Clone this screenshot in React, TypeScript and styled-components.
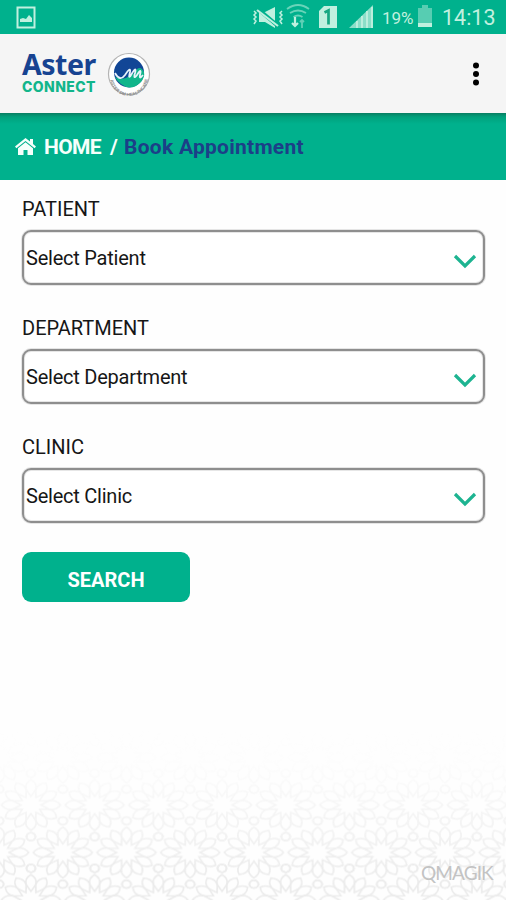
import React from "react";
import styled, { createGlobalStyle } from "styled-components";

const GREEN = "#00b18d";
const NAVY = "#1c3f88";

const GlobalStyle = createGlobalStyle`
  * { box-sizing: border-box; }
  body { margin: 0; background: #fefefe; font-family: Roboto, "Liberation Sans", sans-serif; }
`;

const Screen = styled.div`
  position: relative;
  display: flex;
  flex-direction: column;
  width: 506px;
  height: 900px;
  overflow: hidden;
  background: #fefefe;
`;

const StatusBar = styled.header`
  height: 34px;
  flex: none;
  display: flex;
  justify-content: space-between;
  padding: 0 10px 0 16px;
  background: ${GREEN};
  color: #c0f0df;
`;

const StatusIcons = styled.div`
  display: flex;
  align-items: center;
`;

const Battery = styled.span`
  width: 35px;
  margin-left: 8px;
  font-size: 17px;
  line-height: 34px;
  padding-top: 2px;
`;

const Clock = styled.span`
  width: 54px;
  margin-left: 9px;
  font-size: 21.5px;
  line-height: 36px;
  padding-top: 2px;
  white-space: nowrap;
`;

const AppBar = styled.div`
  height: 79px;
  flex: none;
  display: flex;
  align-items: center;
  padding: 0 22px;
  background: #f5f5f5;
`;

const Brand = styled.div`
  width: 75px;
`;

const BrandName = styled.div`
  height: 30px;
  color: #174391;
  font: 700 28.5px/30px "Noto Sans", sans-serif;
  letter-spacing: -0.5px;
  margin-top: -5px;
`;

const BrandSub = styled.div`
  height: 14px;
  color: #12b58b;
  font: 800 14px/14px Inter, sans-serif;
  letter-spacing: 0.4px;
  margin-top: 1px;
`;

const Emblem = styled.svg`
  margin-left: 10px;
`;

const MenuIcon = styled.svg`
  margin-left: auto;
`;

const Breadcrumb = styled.nav`
  height: 67px;
  flex: none;
  display: flex;
  align-items: center;
  padding-left: 15px;
  background: linear-gradient(#087e62 0, #00a17c 4px, ${GREEN} 11px);
  font-size: 21px;
  font-weight: 700;
`;

const Crumb = styled.span<{ $current?: boolean; $gap: number }>`
  color: ${(p) => (p.$current ? NAVY : "#f5fffb")};
  margin-left: ${(p) => p.$gap}px;
  letter-spacing: ${(p) => (p.$current ? 0.26 : -0.65)}px;
  white-space: nowrap;
`;

const Form = styled.form`
  display: flex;
  flex-direction: column;
  align-items: flex-start;
  padding: 17px 21px 0 22px;
`;

const Field = styled.label`
  width: 100%;
  height: 119px;
  display: block;
`;

const Caption = styled.span`
  display: block;
  height: 33px;
  font-size: 20px;
  line-height: 25px;
  color: #161616;
`;

const SelectBox = styled.span`
  height: 55px;
  display: flex;
  align-items: center;
  justify-content: space-between;
  padding: 0 6px 0 2px;
  border: 2px solid #8e8e8e;
  border-radius: 9px;
  background: #fff;
  box-shadow: 0 0 0 1px rgba(142, 142, 142, 0.22), inset 0 0 0 1px rgba(142, 142, 142, 0.22);
  font-size: 20px;
  letter-spacing: -0.23px;
  color: #161616;
`;

const Chevron = styled.svg`
  margin-top: 6px;
`;

const SearchButton = styled.button`
  width: 168px;
  height: 50px;
  margin-top: -2px;
  padding: 6px 0 0;
  border: 0;
  border-radius: 9px;
  background: ${GREEN};
  color: #fff;
  font: 700 20px Roboto, sans-serif;
`;

const Backdrop = styled.svg`
  position: absolute;
  left: 0;
  bottom: 0;
`;

const Watermark = styled.div`
  position: absolute;
  left: 421px;
  top: 861px;
  color: #c3c3c3;
  font: 19px/24px Lato, sans-serif;
  letter-spacing: -0.9px;
`;

const petals = Array.from({ length: 12 }, (_, i) => i * 30);

function Rosette({ x, y }: { x: number; y: number }) {
  return (
    <g transform={`translate(${x} ${y}) scale(1 .863)`}>
      {petals.map((a) => (
        <path key={a} transform={`rotate(${a})`} d="M10 0L18 -4.9Q25 -6.5 29.5 0Q25 6.5 18 4.9Z" />
      ))}
      {petals.filter((a) => a % 60 === 30).map((a) => (
        <circle key={`k${a}`} transform={`rotate(${a})`} cx="36.7" r="4.5" />
      ))}
    </g>
  );
}

function Pattern() {
  return (
    <Backdrop width="506" height="170" viewBox="0 0 506 170">
      <defs>
        <pattern id="rosettes" width="63.7" height="95" patternUnits="userSpaceOnUse" patternTransform="translate(-.9 27.5)">
          <g fill="none" stroke="#ebebeb" strokeWidth="1.7">
            {[0, 63.7].map((x) => [0, 95].map((y) => <Rosette key={`${x}-${y}`} x={x} y={y} />))}
            <Rosette x={31.85} y={47.5} />
          </g>
        </pattern>
        <linearGradient id="fade" x2="0" y2="1">
          <stop stopColor="#fff" stopOpacity="0" />
          <stop offset=".2" stopColor="#fff" stopOpacity=".06" />
          <stop offset=".85" stopColor="#fff" />
        </linearGradient>
        <mask id="fadeMask"><rect width="506" height="170" fill="url(#fade)" /></mask>
      </defs>
      <rect width="506" height="170" fill="url(#rosettes)" mask="url(#fadeMask)" />
    </Backdrop>
  );
}

function SelectField({ label, value }: { label: string; value: string }) {
  return (
    <Field>
      <Caption>{label}</Caption>
      <SelectBox>
        {value}
        <Chevron width="24" height="16" viewBox="0 0 24 16" fill="none" stroke="#1db491" strokeWidth="3.2">
          <path d="M2 3L12 13L22 3" />
        </Chevron>
      </SelectBox>
    </Field>
  );
}

export default function App() {
  return (
    <>
      <GlobalStyle />
      <Screen>
        <Pattern />
        <StatusBar>
          <svg width="20" height="34" viewBox="0 0 20 34" fill="none" stroke="currentColor" strokeWidth="2">
            <path d="M1.5 7.5h17v20h-17z" /><path d="M4 22v-3l3-1 3 1 3-4 3 3v4z" fill="currentColor" stroke="none" />
          </svg>
          <StatusIcons>
            <svg width="122" height="34" viewBox="253 0 122 34" fill="none" stroke="currentColor" strokeWidth="1.8">
              <path d="M255 11l2 2-2 2 2 2-2 2 2 2-2 3M283 11l-2 2 2 2-2 2 2 2-2 2 2 3" strokeWidth="1.5" />
              <path d="M260 12h6l10-5v21l-10-6h-6z" fill="currentColor" stroke="none" />
              <path d="M259 9l20 17" stroke={GREEN} strokeWidth="4" /><path d="M258 10l21 16" strokeWidth="2.2" />
              <path d="M288 9q11-8 22 0M291 13q8-5 16 0M294.5 17q4.5-3 9 0" opacity=".55" />
              <path d="M296 17v9m-3-3l3 3 3-3" strokeWidth="2.2" /><path d="M303 28v-8m-2 2l2-2 2 2" opacity=".5" />
              <path d="M325 6h13v22h-18V11z" fill="currentColor" stroke="none" />
              <path d="M325.5 12.5l4-2v14" stroke="#16a782" strokeWidth="2.7" />
              <path d="M350 28L374 5v23z" fill="currentColor" stroke="none" opacity=".72" />
              <path d="M358 21v7m5-12v12m5-17v17m5-21v21" />
            </svg>
            <Battery>19%</Battery>
            <svg width="16" height="34" viewBox="0 0 16 34" fill="currentColor">
              <path d="M1 8h4V5h6v3h4v19H1z" opacity=".45" /><path d="M1 23h14v4H1z" />
            </svg>
            <Clock>14:13</Clock>
          </StatusIcons>
        </StatusBar>
        <AppBar>
          <Brand><BrandName>Aster</BrandName><BrandSub>CONNECT</BrandSub></Brand>
          <Emblem width="44" height="44" viewBox="0 0 44 44">
            <defs><path id="ring" d="M3 25a19 19 0 0 0 38 0" /></defs>
            <circle cx="22" cy="22" r="20.5" fill="#fff" stroke="#b4b4b4" strokeWidth="1.2" />
            <circle cx="22" cy="20.5" r="15" fill="#124696" />
            <path d="M8 25q9 4 14-1 6-2 8-7 4-3 7 3 1 5-3 10-10 10-20 2-4-3-6-7" fill="#10b58b" />
            <path d="M8 21q5 9 10 2 6-9 5-3-2 8 1 3 6-10 4-2-2 7 2 2 5-8 3 0-1 5 3 0" fill="none" stroke="#e9f4fb" strokeWidth="1.8" />
            <text fontFamily="Liberation Sans" fontSize="4.4" fontWeight="700" fill="#888"><textPath href="#ring" startOffset="3">ASTER DM HEALTHCARE</textPath></text>
          </Emblem>
          <MenuIcon width="16" height="28" viewBox="0 0 16 28">
            <circle cx="8" cy="5.5" r="3" /><circle cx="8" cy="14" r="3" /><circle cx="8" cy="22.5" r="3" />
          </MenuIcon>
        </AppBar>
        <Breadcrumb>
          <svg width="21" height="18" viewBox="0 0 21 18" fill="#f5fffb">
            <path d="M0 8.5L10.5 0 15 3.6V1h3v5l3 2.5-1.4 1.8-9.1-7.3-9.1 7.3z" /><path d="M3 10.2l7.5-6 7.5 6V17h-5.5v-5H8.5v5H3z" />
          </svg>
          <Crumb $gap={8}>HOME</Crumb><Crumb $gap={9}>/</Crumb><Crumb $gap={7} $current>Book Appointment</Crumb>
        </Breadcrumb>
        <Form>
          <SelectField label="PATIENT" value="Select Patient" />
          <SelectField label="DEPARTMENT" value="Select Department" />
          <SelectField label="CLINIC" value="Select Clinic" />
          <SearchButton type="button">SEARCH</SearchButton>
        </Form>
        <Watermark>QMAGIK</Watermark>
      </Screen>
    </>
  );
}
